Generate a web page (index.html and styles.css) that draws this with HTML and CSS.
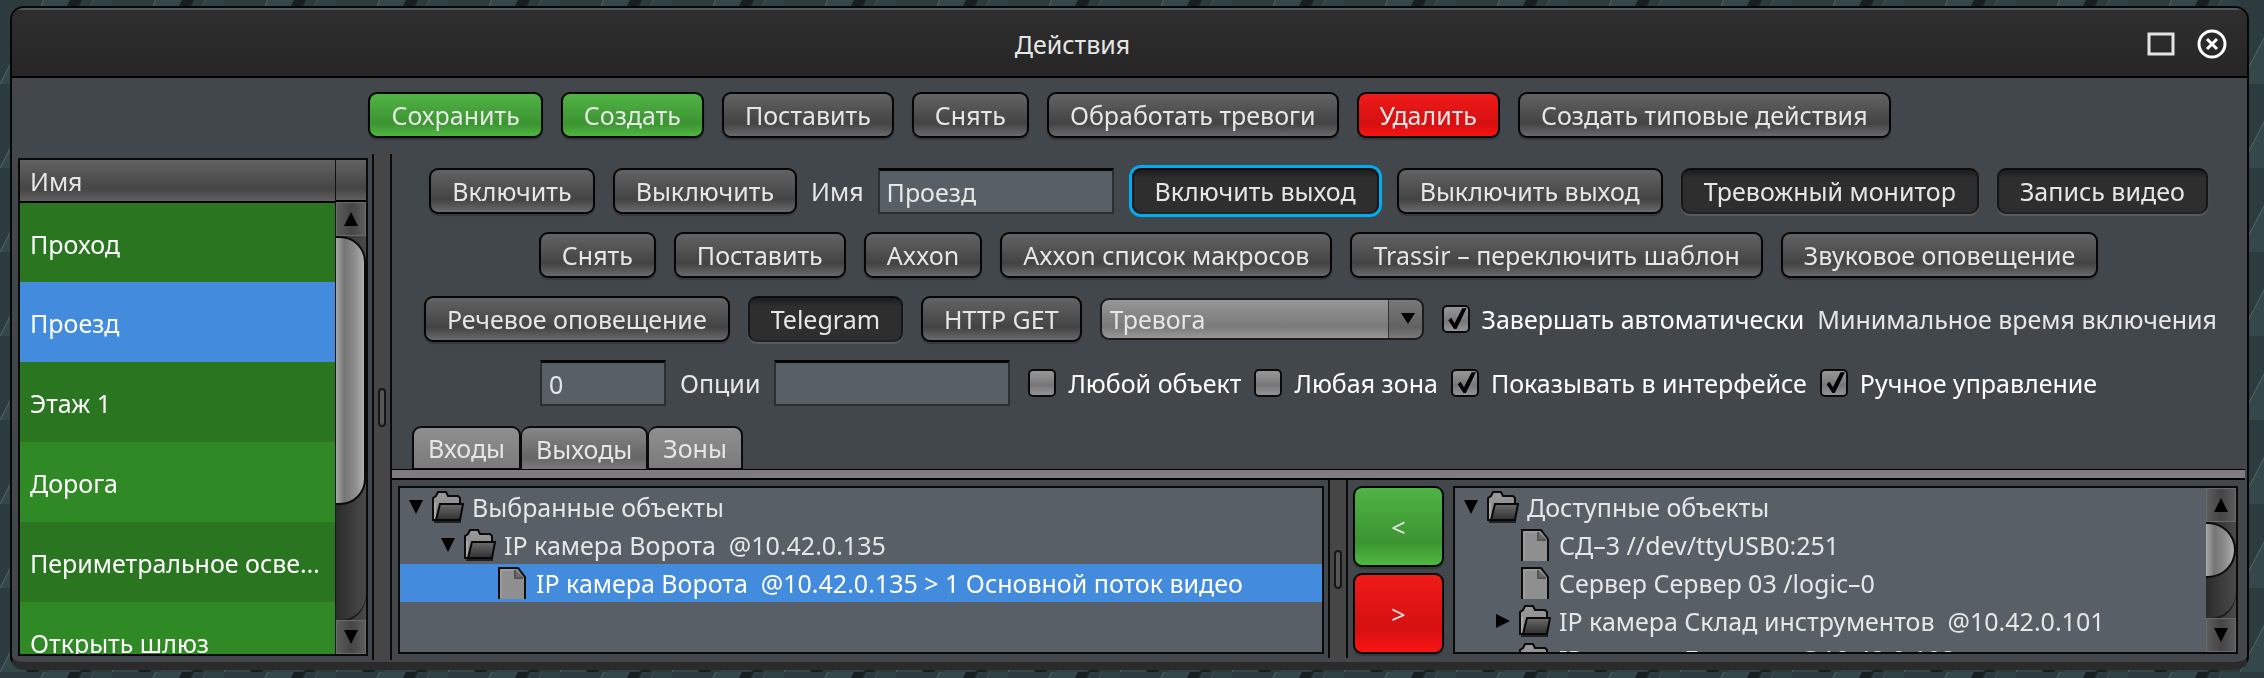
FILE: index.html
```html
<!DOCTYPE html>
<html lang="ru">
<head>
    <meta charset="utf-8">
    <title>Действия</title>
    <meta name="viewport" content="width=device-width, initial-scale=1.0">
    <link rel="stylesheet" href="styles.css">
</head>
<body>
    <svg class="backdrop" aria-hidden="true">
        <defs>
            <pattern id="plates" width="112" height="84" patternUnits="userSpaceOnUse">
                <rect width="112" height="84" fill="#2c3b3d"/>
                <path d="M0 84L44 0H70L26 84z" fill="#34474a"/>
                <path d="M26 84L70 0H82L38 84z" fill="#161f22"/>
                <path d="M44 0L0 84M94 0L50 84" stroke="#566668" stroke-width="1"/>
                <path d="M94 0H112V20L78 84H50z" fill="#2f4144"/>
                <path d="M112 22L80 84H90L112 44z" fill="#182124"/>
            </pattern>
            <linearGradient id="folderBack" x2="0" y2="1">
                <stop offset="0" stop-color="#9a9a9a"/>
                <stop offset="1" stop-color="#858585"/>
            </linearGradient>
            <linearGradient id="folderFront" x2="0" y2="1">
                <stop offset="0" stop-color="#6b6b6b"/>
                <stop offset="1" stop-color="#2f2f2f"/>
            </linearGradient>
            <symbol id="folder" viewBox="0 0 32 32">
                <path d="M2 30h27v2H2z" fill="#1d2024"/>
                <path d="M1 29V7l3-2 2-4h8l2 4h10l2 2v22z" fill="url(#folderBack)" stroke="#0c0c0c" stroke-width="2"/>
                <path d="M3 28V12" stroke="#c4c4c4"/>
                <path d="M4 29l4-16h23l-3 16z" fill="url(#folderFront)" stroke="#080808" stroke-width="2"/>
            </symbol>
            <symbol id="file" viewBox="0 0 28 32">
                <path d="M1 32V1h19l7 9v22" fill="#8f8f8f" stroke="#0c0c0c" stroke-width="2"/>
                <path d="M3 31V3h14" fill="none" stroke="#a8a8a8"/>
                <path d="M17 3v8h9z" fill="#6a6a6a"/>
                <path d="M17 3v8h8" fill="none" stroke="#555" stroke-width="2"/>
            </symbol>
        </defs>
        <rect width="100%" height="100%" fill="url(#plates)"/>
    </svg>

    <div class="window">
        <header class="titlebar">
            <h1>Действия</h1>
            <div class="window-buttons">
                <button type="button" aria-label="Развернуть">
                    <svg width="28" height="24"><rect x="2" y="2" width="24" height="20" fill="none" stroke="#e4e4e4" stroke-width="3"/></svg>
                </button>
                <button type="button" aria-label="Закрыть">
                    <svg width="30" height="30"><circle cx="15" cy="15" r="13" fill="none" stroke="#fff" stroke-width="3"/><path d="M10 10l10 10M20 10L10 20" stroke="#fff" stroke-width="3"/></svg>
                </button>
            </div>
        </header>

        <div class="toolbar">
            <button type="button" class="btn green">Сохранить</button>
            <button type="button" class="btn green">Создать</button>
            <button type="button" class="btn">Поставить</button>
            <button type="button" class="btn">Снять</button>
            <button type="button" class="btn">Обработать тревоги</button>
            <button type="button" class="btn red">Удалить</button>
            <button type="button" class="btn">Создать типовые действия</button>
        </div>

        <div class="content">
            <div class="list">
                <div class="list-view">
                    <table>
                        <thead>
                            <tr><th>Имя</th></tr>
                        </thead>
                        <tbody>
                            <tr><td>Проход</td></tr>
                            <tr class="selected"><td>Проезд</td></tr>
                            <tr><td>Этаж 1</td></tr>
                            <tr class="light"><td>Дорога</td></tr>
                            <tr><td>Периметральное освещение</td></tr>
                            <tr class="light"><td>Открыть шлюз</td></tr>
                        </tbody>
                    </table>
                </div>
                <div class="list-side">
                    <div class="list-corner"></div>
                    <div class="scrollbar">
                        <span class="arrow up"></span>
                        <div class="track"><div class="thumb list-thumb"></div></div>
                        <span class="arrow down"></span>
                    </div>
                </div>
            </div>

            <div class="splitter"><span class="grip"></span></div>

            <div class="editor">
                <form class="form">
                    <div class="row">
                        <button type="button" class="btn">Включить</button>
                        <button type="button" class="btn">Выключить</button>
                        <label class="caption" for="name">Имя</label>
                        <input type="text" class="text-field" id="name" value="Проезд">
                        <button type="button" class="btn pressed focused">Включить выход</button>
                        <button type="button" class="btn">Выключить выход</button>
                        <button type="button" class="btn pressed">Тревожный монитор</button>
                        <button type="button" class="btn pressed">Запись видео</button>
                    </div>
                    <div class="row">
                        <button type="button" class="btn">Снять</button>
                        <button type="button" class="btn">Поставить</button>
                        <button type="button" class="btn">Axxon</button>
                        <button type="button" class="btn">Axxon список макросов</button>
                        <button type="button" class="btn">Trassir – переключить шаблон</button>
                        <button type="button" class="btn">Звуковое оповещение</button>
                    </div>
                    <div class="row">
                        <button type="button" class="btn">Речевое оповещение</button>
                        <button type="button" class="btn pressed">Telegram</button>
                        <button type="button" class="btn">HTTP GET</button>
                        <div class="select">
                            <select aria-label="Тип">
                                <option>Тревога</option>
                            </select>
                        </div>
                        <label class="check"><input type="checkbox" checked>Завершать автоматически</label>
                        <label class="caption" for="minTime">Минимальное время включения</label>
                    </div>
                    <div class="row">
                        <input type="text" class="text-field short" id="minTime" value="0">
                        <label class="caption" for="options">Опции</label>
                        <input type="text" class="text-field" id="options">
                        <label class="check"><input type="checkbox">Любой объект</label>
                        <label class="check"><input type="checkbox">Любая зона</label>
                        <label class="check"><input type="checkbox" checked>Показывать в интерфейсе</label>
                        <label class="check"><input type="checkbox" checked>Ручное управление</label>
                    </div>
                </form>

                <div class="tabs" role="tablist">
                    <button type="button" role="tab">Входы</button>
                    <button type="button" role="tab" class="active" aria-selected="true">Выходы</button>
                    <button type="button" role="tab">Зоны</button>
                </div>

                <div class="tab-panel">
                    <div class="tree chosen">
                        <ul>
                            <li><span class="toggle open"></span><svg class="folder"><use href="#folder"/></svg>Выбранные объекты</li>
                            <li class="level-1"><span class="toggle open"></span><svg class="folder"><use href="#folder"/></svg>IP камера Ворота &nbsp;@10.42.0.135</li>
                            <li class="level-2 selected"><span class="toggle"></span><svg class="file"><use href="#file"/></svg>IP камера Ворота &nbsp;@10.42.0.135 &gt; 1 Основной поток видео</li>
                        </ul>
                    </div>
                    <div class="splitter"><span class="grip"></span></div>
                    <div class="move">
                        <button type="button" class="btn green">&lt;</button>
                        <button type="button" class="btn red">&gt;</button>
                    </div>
                    <div class="tree available">
                        <ul>
                            <li><span class="toggle open"></span><svg class="folder"><use href="#folder"/></svg>Доступные объекты</li>
                            <li class="level-1"><span class="toggle"></span><svg class="file"><use href="#file"/></svg>СД–3 //dev/ttyUSB0:251</li>
                            <li class="level-1"><span class="toggle"></span><svg class="file"><use href="#file"/></svg>Сервер Сервер 03 /logic–0</li>
                            <li class="level-1"><span class="toggle closed"></span><svg class="folder"><use href="#folder"/></svg>IP камера Склад инструментов &nbsp;@10.42.0.101</li>
                            <li class="level-1"><span class="toggle closed"></span><svg class="folder"><use href="#folder"/></svg>IP камера Бытовка &nbsp;@10.42.0.102</li>
                        </ul>
                        <div class="scrollbar">
                            <span class="arrow up"></span>
                            <div class="track"><div class="thumb tree-thumb"></div></div>
                            <span class="arrow down"></span>
                        </div>
                    </div>
                </div>
            </div>
        </div>
    </div>
</body>
</html>
```
FILE: styles.css
```css
* {
    box-sizing: border-box;
}

body {
    margin: 0;
    height: 100vh;
    padding: 6px 15px 8px 10px;
    background: #2c3b3d;
    color: #e6e6e6;
    font-family: "Noto Sans", "Open Sans", sans-serif;
    font-size: 25px;
    line-height: 32px;
    overflow: hidden;
}

button,
input,
select {
    font: inherit;
    color: inherit;
    margin: 0;
}

.backdrop {
    position: fixed;
    top: 0;
    left: 0;
    width: 100%;
    height: 100%;
    z-index: -1;
}

.window {
    display: flex;
    flex-direction: column;
    height: 100%;
    background: #42474b;
    border: 2px solid #060606;
    border-bottom: 8px solid #2b2b2b;
    border-radius: 14px;
    overflow: hidden;
}

/* title bar */
.titlebar {
    display: flex;
    align-items: center;
    gap: 14px;
    height: 70px;
    flex: none;
    padding: 2px 20px 0 0;
    background: linear-gradient(#2e2e2e, #262626);
    border-top: 2px solid #4d5a60;
    border-bottom: 2px solid #000;
}

.titlebar h1 {
    flex: 1;
    margin: 0;
    font-size: 25px;
    font-weight: normal;
    text-align: center;
}

.window-buttons {
    display: flex;
    justify-content: flex-end;
    align-items: center;
    gap: 22px;
}

.window-buttons button {
    display: flex;
    padding: 0;
    border: 0;
    background: none;
}

/* buttons */
.btn {
    height: 46px;
    padding: 0 21px;
    border: 2px solid #050505;
    border-radius: 9px;
    background: linear-gradient(#636363, #434343 70%, #6a6a6a);
    box-shadow: 0 2px 1px #34383c;
    white-space: nowrap;
}

.btn.green {
    background: linear-gradient(#50b344, #3c9431 70%, #4fb842);
}

.btn.red {
    background: linear-gradient(#f01a1a, #d51010 70%, #fa1414);
}

.btn.pressed {
    background: linear-gradient(#1c1c1c, #2e2e2e 20%);
    border-color: #0c0c0c #161616 #222;
    box-shadow: 0 2px 1px #5a5c5e;
}

.btn.focused {
    box-shadow: 0 0 0 3px #00adf2;
}

.toolbar {
    display: flex;
    justify-content: center;
    gap: 18px;
    padding: 14px 0 16px;
}

.content {
    display: flex;
    flex: 1;
    min-height: 0;
    padding: 0 2px 2px 6px;
}

/* list of actions */
.list {
    display: flex;
    width: 350px;
    margin: 4px 4px 4px 0;
    border: 2px solid #0a0a0a;
    overflow: hidden;
}

.list-view {
    flex: 1;
    min-width: 0;
}

.list table {
    width: 100%;
    table-layout: fixed;
    border-collapse: collapse;
}

.list th {
    height: 42px;
    padding: 0 10px;
    border-bottom: 2px solid #000;
    background: linear-gradient(#626262, #454545 70%, #606060);
    font-weight: normal;
    text-align: left;
}

.list td {
    height: 80px;
    padding: 2px 10px 0;
    background: #2a7620;
    color: #fff;
    overflow: hidden;
    text-overflow: ellipsis;
    white-space: nowrap;
}

.list .light td {
    background: #2f8a26;
}

.list .selected td {
    background: #438bdd;
}

.list-side {
    display: flex;
    flex-direction: column;
    width: 31px;
    border-left: 1px solid #111;
}

.list-corner {
    height: 42px;
    flex: none;
    border-bottom: 2px solid #000;
    background: linear-gradient(#626262, #454545 70%, #606060);
}

.list-side .scrollbar {
    flex: 1;
}

/* scroll bars */
.scrollbar {
    display: flex;
    flex-direction: column;
    flex: none;
    width: 30px;
    min-height: 0;
    background: linear-gradient(90deg, #2b2b2b, #4a4a4a);
}

.arrow {
    display: flex;
    align-items: center;
    justify-content: center;
    height: 34px;
    flex: none;
    border: 1px solid #6b6b6b;
    background: linear-gradient(90deg, #5c5c5c, #454545 50%, #5c5c5c);
}

.arrow::before,
.toggle::before {
    content: "";
    border: 7px solid transparent;
}

.arrow.up::before {
    border-bottom: 14px solid #000;
    border-top: 0;
}

.arrow.down::before {
    border-top: 14px solid #000;
    border-bottom: 0;
}

.track {
    flex: 1;
    min-height: 0;
    border-radius: 0 0 26px 0;
    box-shadow: 0 2px 0 #181818;
}

.thumb {
    border: 2px solid #0a0a0a;
    border-left: 0;
    background: linear-gradient(90deg, #a8a8a8, #757575 30%, #8f8f8f 70%, #b0b0b0);
}

.list-thumb {
    height: 70%;
    border-radius: 0 26px 26px 0;
}

.tree-thumb {
    height: 58%;
    border-radius: 0 28px 28px 0;
}

/* splitters */
.splitter {
    display: flex;
    align-items: center;
    justify-content: center;
    width: 20px;
    flex: none;
    background: #464646;
    border: solid #0a0a0a;
    border-width: 0 2px;
}

.grip {
    width: 8px;
    height: 39px;
    border: 2px solid #161616;
    border-radius: 4px;
    background: #565656;
}

/* action editor */
.editor {
    display: flex;
    flex-direction: column;
    flex: 1;
    min-width: 0;
}

.form {
    display: flex;
    flex-direction: column;
    gap: 18px;
    padding: 14px 0 20px;
}

.row {
    display: flex;
    justify-content: center;
    align-items: center;
    gap: 18px;
    height: 46px;
}

.caption {
    margin: 0 -4px;
    white-space: nowrap;
}

.text-field {
    width: 236px;
    height: 46px;
    padding: 0 7px;
    border: 2px solid #2b2d2f;
    border-top: 3px solid #060606;
    background: #585f67;
}

.text-field.short {
    width: 126px;
}

.select {
    position: relative;
    width: 324px;
}

.select select {
    display: block;
    width: 100%;
    height: 42px;
    padding: 0 8px;
    border: 2px solid #1c1c1c;
    border-radius: 9px;
    background: linear-gradient(90deg, transparent 286px, #333 286px, #333 287px, rgba(0, 0, 0, .2) 287px),
        linear-gradient(#969696, #7a7a7a 70%, #979797);
    appearance: none;
}

.select::after {
    content: "";
    position: absolute;
    right: 9px;
    top: 15px;
    border: 7px solid transparent;
    border-top: 11px solid #000;
    border-bottom: 0;
}

.check {
    display: flex;
    align-items: center;
    gap: 12px;
    color: #fff;
    white-space: nowrap;
}

.check + .check,
.check + .caption {
    margin-left: -5px;
}

.check input {
    width: 28px;
    height: 28px;
    border: 2px solid #0a0a0a;
    border-radius: 5px;
    background: linear-gradient(#979797, #787878 60%, #949494);
    appearance: none;
}

.check input:checked::before {
    content: "";
    display: block;
    width: 24px;
    height: 24px;
    background: #000;
    clip-path: polygon(20% 55%, 32% 45%, 46% 68%, 78% 5%, 96% 5%, 54% 92%, 44% 92%);
}

/* tabs */
.tabs {
    display: flex;
    padding-left: 20px;
    height: 44px;
    flex: none;
}

.tabs button {
    padding: 0 14px;
    border: 2px solid #0a0a0a;
    border-radius: 9px 9px 0 0;
    background: linear-gradient(#8f8f8f, #7b7b7b);
}

.tabs button + button {
    border-left-width: 1px;
}

.tabs .active {
    border-bottom: 0;
    background: linear-gradient(#868686, #666 70%, #7a7a7a);
}

.tab-panel {
    display: flex;
    flex: 1;
    min-height: 0;
    padding: 2px 7px 2px 6px;
    border-top: 8px solid #7f7c7f;
    box-shadow: 0 -1px 0 #000, inset 0 2px 0 #000;
}

/* trees */
.tree {
    display: flex;
    flex: 1;
    min-width: 0;
    margin: 6px 4px 4px 0;
    border: 2px solid #0a0a0a;
    background: #585f67;
    overflow: hidden;
}

.tree.available {
    flex: none;
    width: 785px;
    margin-right: 0;
}

.tree ul {
    flex: 1;
    min-width: 0;
    margin: 0;
    padding: 0;
    list-style: none;
}

.tree li {
    display: flex;
    align-items: center;
    gap: 8px;
    height: 38px;
    padding-left: 8px;
    white-space: nowrap;
}

.tree .level-1 {
    padding-left: 40px;
}

.tree .level-2 {
    padding-left: 72px;
}

.tree .selected {
    background: #438bdd;
    color: #fff;
}

.tree svg {
    width: 32px;
    height: 32px;
    flex: none;
}

.toggle {
    display: flex;
    justify-content: center;
    width: 16px;
    flex: none;
}

.toggle::before {
    display: none;
}

.toggle.open::before {
    display: block;
    border-top: 14px solid #000;
    border-bottom: 0;
}

.toggle.closed::before {
    display: block;
    border-left: 14px solid #000;
    border-right: 0;
}

.move {
    display: flex;
    flex-direction: column;
    gap: 6px;
    margin: 6px 9px 4px 5px;
}

.move .btn {
    flex: 1;
    width: 91px;
}
```
